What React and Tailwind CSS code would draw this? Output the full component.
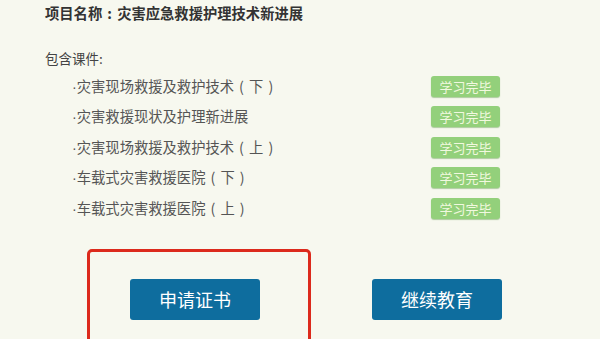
function P({ c }) {
  return <span className="inline-block w-[15px] text-center">{c}</span>;
}

export default function App() {
  const items = [
    ["灾害现场救援及救护技术", "下"],
    ["灾害救援现状及护理新进展", null],
    ["灾害现场救援及救护技术", "上"],
    ["车载式灾害救援医院", "下"],
    ["车载式灾害救援医院", "上"],
  ];
  return (
    <div
      className="w-[600px] h-[339px] overflow-hidden bg-[#f7f8ef] flex flex-col"
      style={{ fontFamily: '"Noto Sans CJK SC", "Noto Sans", sans-serif' }}
    >
      <div className="pl-[45px] pt-[3px] h-[20px] leading-[20px] text-[14.3px] font-bold text-[#333333] whitespace-nowrap">
        项目名称<P c=":" />灾害应急救援护理技术新进展
      </div>
      <div className="pl-[45px] mt-[28px] h-[20px] leading-[20px] text-[13.5px] text-[#444444]">
        包含课件:
      </div>
      <div className="flex flex-col pl-[72px] mt-[3px]">
        {items.map(([t, s], i) => (
          <div key={i} className="h-[30.5px] flex items-center">
            <div className="w-[359px] text-[14.3px] leading-[20px] text-[#555555] whitespace-nowrap">
              <span className="font-['Liberation_Sans',sans-serif]">·</span>
              {t}
              {s && (
                <>
                  <P c="(" />
                  {s}
                  <P c=")" />
                </>
              )}
            </div>
            <div className="w-[69px] h-[21px] rounded-[3px] bg-[#93d07b] shadow-[0_1px_1px_rgba(100,160,80,0.5)] flex items-center justify-center text-[13px] text-[#f1f8df] leading-none">
              学习完毕
            </div>
          </div>
        ))}
      </div>
      <div className="flex items-start pl-[87px] mt-[25px]">
        <div className="w-[224px] h-[100px] border-[3px] border-[#dc2a1c] rounded-[5px] pt-[27px] pl-[40px] shrink-0">
          <div className="w-[130px] h-[41px] rounded-[3px] bg-[#0e6d9e] flex items-center justify-center text-white text-[18px]">
            申请证书
          </div>
        </div>
        <div className="ml-[61px] mt-[30px] w-[130px] h-[41px] rounded-[3px] bg-[#0e6d9e] flex items-center justify-center text-white text-[18px]">
          继续教育
        </div>
      </div>
    </div>
  );
}
